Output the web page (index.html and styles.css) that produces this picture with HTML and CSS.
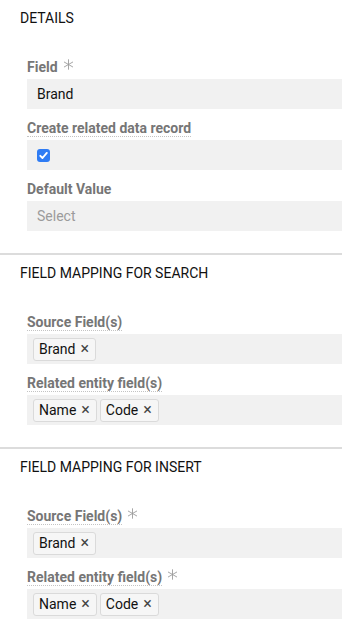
FILE: index.html
```html
<!DOCTYPE html>
<html>
  <head>
    <title>Related Data Record</title>
    <link rel="stylesheet" href="styles.css">
  </head>
  <body>
    <section class="panel">
      <h2 class="panel-title">Details</h2>
      <div class="field">
        <div class="field-label">
          <span class="label-text">Field</span>
          <span class="required"><svg width="11" height="11" viewBox="0 0 10 10"><path d="M5 0.3V9.7M0.9 2.65L9.1 7.35M0.9 7.35L9.1 2.65" stroke="#9a9a9a" stroke-width="0.8" fill="none"/></svg></span>
        </div>
        <div class="field-box">Brand</div>
      </div>
      <div class="field">
        <div class="field-label">
          <span class="label-text hint">Create related data record</span>
        </div>
        <div class="field-box">
          <span class="check"><svg width="9" height="9" viewBox="0 0 9 9"><path d="M1.3 4.8L3.5 7L7.8 1.9" stroke="#fff" stroke-width="1.9" fill="none" stroke-linecap="round" stroke-linejoin="round"/></svg></span>
        </div>
      </div>
      <div class="field">
        <div class="field-label">
          <span class="label-text">Default Value</span>
        </div>
        <div class="field-box placeholder">Select</div>
      </div>
    </section>

    <section class="panel">
      <h2 class="panel-title">Field mapping for search</h2>
      <div class="field">
        <div class="field-label">
          <span class="label-text hint">Source Field(s)</span>
        </div>
        <div class="field-box tags">
          <span class="tag">Brand <i>&times;</i></span>
        </div>
      </div>
      <div class="field">
        <div class="field-label">
          <span class="label-text hint">Related entity field(s)</span>
        </div>
        <div class="field-box tags">
          <span class="tag">Name <i>&times;</i></span>
          <span class="tag">Code <i>&times;</i></span>
        </div>
      </div>
    </section>

    <section class="panel">
      <h2 class="panel-title">Field mapping for insert</h2>
      <div class="field">
        <div class="field-label">
          <span class="label-text hint">Source Field(s)</span>
          <span class="required"><svg width="11" height="11" viewBox="0 0 10 10"><path d="M5 0.3V9.7M0.9 2.65L9.1 7.35M0.9 7.35L9.1 2.65" stroke="#9a9a9a" stroke-width="0.8" fill="none"/></svg></span>
        </div>
        <div class="field-box tags">
          <span class="tag">Brand <i>&times;</i></span>
        </div>
      </div>
      <div class="field">
        <div class="field-label">
          <span class="label-text hint">Related entity field(s)</span>
          <span class="required"><svg width="11" height="11" viewBox="0 0 10 10"><path d="M5 0.3V9.7M0.9 2.65L9.1 7.35M0.9 7.35L9.1 2.65" stroke="#9a9a9a" stroke-width="0.8" fill="none"/></svg></span>
        </div>
        <div class="field-box tags">
          <span class="tag">Name <i>&times;</i></span>
          <span class="tag">Code <i>&times;</i></span>
        </div>
      </div>
    </section>
  </body>
</html>
```

FILE: styles.css
```css
html {
  background: #fff;
}
body {
  margin: 0;
  font-family: Roboto, "Liberation Sans", sans-serif;
  color: #111;
}

.panel {
  padding: 10px 0 22px 0;
  border-bottom: 2px solid #dcdcdc;
}

.panel-title {
  margin: 0 0 33px 20px;
  font-size: 14px;
  line-height: 16px;
  font-weight: 400;
  text-transform: uppercase;
  color: #111;
}

.field {
  margin: 0 0 11px 27px;
}
.field:last-child {
  margin-bottom: 0;
}

.field-label {
  display: flex;
  align-items: flex-start;
  height: 20px;
}

.label-text {
  font-size: 14px;
  line-height: 16px;
  font-weight: 700;
  color: #767676;
}

.hint {
  border-bottom: 1px dotted #c4c4c4;
}

.required {
  margin: -4px 0 0 5px;
  height: 11px;
}

.field-box {
  display: flex;
  align-items: center;
  height: 30px;
  padding-left: 10px;
  background-color: #f1f1f1;
  font-size: 14px;
}

.placeholder {
  color: #9b9b9b;
}

.check {
  display: flex;
  align-items: center;
  justify-content: center;
  width: 13px;
  height: 13px;
  border-radius: 3px;
  background-color: #2f7cf4;
}

.tags {
  padding-left: 6px;
  gap: 3px;
}

.tag {
  display: inline-flex;
  align-items: center;
  height: 21px;
  padding: 0 6px 0 5px;
  border: 1px solid #dadada;
  border-radius: 3px;
  background-color: #f6f6f6;
  color: #111;
  font-size: 14px;
}

.tag i {
  font-style: normal;
  font-size: 16px;
  line-height: 16px;
  color: #444;
  margin-left: 5px;
}
```
